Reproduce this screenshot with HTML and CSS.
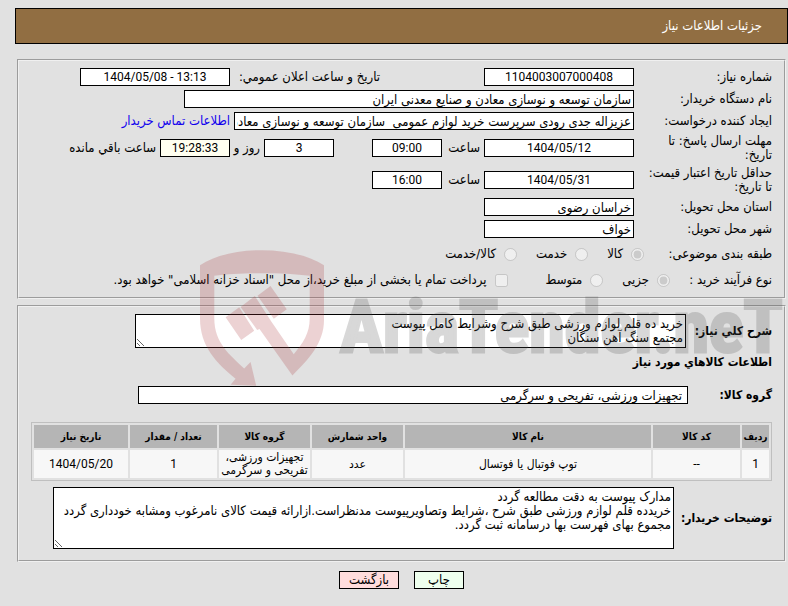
FILE: index.html
```
<!DOCTYPE html>
<html lang="fa" dir="rtl">
<head>
  <meta charset="UTF-8">
  <meta name="viewport" content="width=device-width, initial-scale=1">
  <title>جزئیات اطلاعات نیاز</title>
  <link rel="stylesheet" href="styles.css">
</head>
<body>

<header class="title-bar">جزئیات اطلاعات نیاز</header>

<main>
  <fieldset class="box">
    <div class="row">
      <label class="caption" for="needNo">شماره نیاز:</label>
      <input class="field w150 num" id="needNo" type="text" value="1104003007000408" readonly>
      <label class="announce" for="announceDate">تاریخ و ساعت اعلان عمومي:</label>
      <input class="field w150 num" id="announceDate" type="text" dir="ltr" value="1404/05/08 - 13:13" readonly>
    </div>
    <div class="row">
      <label class="caption" for="buyer">نام دستگاه خریدار:</label>
      <input class="field w450" id="buyer" type="text" value="سازمان توسعه و نوسازی معادن و صنایع معدنی ایران" readonly>
    </div>
    <div class="row">
      <label class="caption" for="creator">ایجاد کننده درخواست:</label>
      <input class="field w400" id="creator" type="text" value="عزیزاله جدی رودی سرپرست خرید لوازم عمومی  سازمان توسعه و نوسازی معادن و صنایع معدنی ایران" readonly>
      <a class="contact" href="#">اطلاعات تماس خریدار</a>
    </div>
    <div class="row tall">
      <label class="caption" for="replyDate">مهلت ارسال پاسخ: تا<br>تاریخ:</label>
      <input class="field w150 num" id="replyDate" type="text" value="1404/05/12" readonly>
      <label class="unit" for="replyHour">ساعت</label>
      <input class="field w70 num" id="replyHour" type="text" value="09:00" readonly>
      <input class="field w70 num days" id="daysLeft" type="text" value="3" aria-label="روز" readonly>
      <label class="and" for="timeLeft">روز و</label>
      <input class="field w70 num timer" id="timeLeft" type="text" value="19:28:33" readonly>
      <span>ساعت باقي مانده</span>
    </div>
    <div class="row tall">
      <label class="caption" for="priceDate">حداقل تاریخ اعتبار قیمت:<br>تا تاریخ:</label>
      <input class="field w150 num" id="priceDate" type="text" value="1404/05/31" readonly>
      <label class="unit" for="priceHour">ساعت</label>
      <input class="field w70 num" id="priceHour" type="text" value="16:00" readonly>
    </div>
    <div class="row">
      <label class="caption" for="province">استان محل تحویل:</label>
      <input class="field w150" id="province" type="text" value="خراسان رضوی" readonly>
    </div>
    <div class="row">
      <label class="caption" for="city">شهر محل تحویل:</label>
      <input class="field w150" id="city" type="text" value="خواف" readonly>
    </div>
    <div class="row options kind">
      <span class="options-title">طبقه بندی موضوعی:</span>
      <label class="option"><input type="radio" name="kind" checked disabled>کالا</label>
      <label class="option"><input type="radio" name="kind" disabled>خدمت</label>
      <label class="option"><input type="radio" name="kind" disabled>کالا/خدمت</label>
    </div>
    <div class="row options process">
      <span class="options-title">نوع فرآیند خرید :</span>
      <label class="option"><input type="radio" name="process" checked disabled>جزیی</label>
      <label class="option"><input type="radio" name="process" disabled>متوسط</label>
      <label class="option treasury"><input type="checkbox" disabled>پرداخت تمام یا بخشی از مبلغ خرید،از محل "اسناد خزانه اسلامی" خواهد بود.</label>
    </div>
  </fieldset>

  <fieldset class="box details">
    <div class="line">
      <label class="heading summary-label" for="summary">شرح کلي نیاز:</label>
      <textarea class="field summary" id="summary" readonly>خرید ده قلم لوازم ورزشی طبق شرح وشرایط کامل پیوست
مجتمع سنگ آهن سنگان</textarea>
    </div>
    <h2 class="heading">اطلاعات کالاهاي مورد نیاز</h2>
    <div class="line group">
      <label class="heading" for="group">گروه کالا:</label>
      <input class="field group-field" id="group" type="text" value="تجهیزات ورزشی، تفریحی و سرگرمی" readonly>
    </div>
    <table class="goods">
      <thead>
        <tr>
          <th class="col-row">ردیف</th>
          <th class="col-code">کد کالا</th>
          <th>نام کالا</th>
          <th class="col-mid">واحد شمارش</th>
          <th class="col-mid">گروه کالا</th>
          <th class="col-code">تعداد / مقدار</th>
          <th class="col-date">تاریخ نیاز</th>
        </tr>
      </thead>
      <tbody>
        <tr>
          <td class="num">1</td>
          <td class="num">--</td>
          <td>توپ فوتبال یا فوتسال</td>
          <td>عدد</td>
          <td>تجهیزات ورزشی، تفریحی و سرگرمی</td>
          <td class="num">1</td>
          <td class="num">1404/05/20</td>
        </tr>
      </tbody>
    </table>
    <div class="line">
      <label class="heading notes-label" for="notes">توضیحات خریدار:</label>
      <textarea class="field notes" id="notes" readonly>مدارک پیوست به دقت مطالعه گردد
خریدده قلم لوازم ورزشی طبق شرح ،شرایط وتصاویرپیوست مدنظراست.ازارائه قیمت کالای نامرغوب ومشابه خودداری گردد
مجموع بهای فهرست بها درسامانه ثبت گردد.</textarea>
    </div>
  </fieldset>

  <div class="actions">
    <button class="btn print" type="button">چاپ</button>
    <button class="btn back" type="button">بازگشت</button>
  </div>
</main>

<div class="watermark" dir="ltr" aria-hidden="true">
  <svg class="shield" viewBox="600 60 373 408">
    <path d="M600 105 C690 45 880 45 973 105 V270 C973 340 925 390 878 437 L779 297 L772 300 L722 231 L765 198 L815 275 L882 373 C910 340 930 310 930 265 V137 C850 127 720 127 643 137 V265 C643 340 690 375 733 416 L752 396 L769 468 L692 465 L707 447 C650 400 600 350 600 265 Z"/>
    <path d="M677 262 L718 232 L763 302 L724 330 Z M773 197 L812 168 L861 238 L822 266 Z"/>
  </svg>
  <span class="brand">AriaTender.neT</span>
</div>

</body>
</html>
```
FILE: styles.css
```
body {
  margin: 0;
  padding: 8px 0 0;
  position: relative;
  overflow-x: hidden;
  background-color: #e1e1e1;
  color: #000;
  font-family: Tahoma, 'DejaVu Sans Condensed', 'DejaVu Sans', sans-serif;
  font-size: 13px;
  line-height: 14px;
}

.title-bar {
  margin-left: 15px;
  padding: 10px 25px;
  border: 1px solid #000;
  background-color: #916e42;
  color: #fff;
}

main {
  padding: 15px 2px 0 17px;
}

.box {
  margin: 0 0 6px;
  padding: 5px 12px;
  min-width: 0;
  border: 2px groove #f0f0f0;
}

/* form rows */
.row {
  display: flex;
  align-items: center;
  gap: 4px;
  height: 22px;
  white-space: nowrap;
}

.row.tall {
  height: 32px;
}

.caption {
  width: 134px;
}

.field {
  box-sizing: border-box;
  height: 18px;
  margin: 0;
  padding: 0 2px;
  border: 1px solid #000;
  border-radius: 0;
  background-color: #fff;
  color: #000;
  font: inherit;
}

.w70 { width: 70px; }
.w150 { width: 150px; }
.w400 { width: 400px; }
.w450 { width: 450px; }

.announce {
  width: 146px;
  margin-right: 100px;
}

.contact {
  color: #10e;
  text-decoration: none;
}

.unit {
  width: 34px;
}

.and {
  width: 26px;
}

.days {
  margin-right: 34px;
}

.timer {
  background-color: #fffff0;
}

/* radios and tick box */
.options {
  height: 28px;
  gap: 19px;
}

.options.process {
  height: 24px;
}

.option {
  display: flex;
  align-items: center;
  gap: 8px;
}

.option input {
  width: 13px;
  height: 13px;
  margin: 0;
}

.kind .options-title {
  width: 109px;
}

.process .options-title {
  width: 83px;
}

.treasury {
  margin-right: 19px;
}

/* goods section */
.details {
  padding: 7px 12px 11px;
}

.line {
  display: flex;
  align-items: center;
  gap: 4px;
}

.heading {
  margin: 0;
  font-size: 12px;
  font-weight: bold;
  line-height: 28px;
  white-space: nowrap;
}

.summary-label {
  width: 82px;
}

.notes-label {
  width: 94px;
}

.group {
  justify-content: space-between;
  margin: 5px 0 13px;
}

.group-field {
  width: 550px;
  margin-left: 107px;
  padding: 0 5px;
}

textarea.field {
  padding: 2px;
}

textarea.summary {
  width: 551px;
  height: 34px;
}

textarea.notes {
  width: 621px;
  height: 62px;
}

.goods {
  width: 100%;
  margin-bottom: 6px;
  border: 1px solid #bfbfbf;
  border-spacing: 2px;
  table-layout: fixed;
  font-size: 12px;
  line-height: 13px;
  text-align: center;
}

.goods th {
  height: 23px;
  padding: 0;
  background-color: #b5b5b5;
  font-size: 10px;
}

.goods td {
  height: 28px;
  padding: 0;
  background-color: #f7f7f7;
}

.field.num,
.goods .num {
  font-family: Tahoma, Roboto, sans-serif;
  font-size: 12px;
  text-align: center;
}

.col-row { width: 27px; }
.col-code { width: 87px; }
.col-mid { width: 91px; }
.col-date { width: 94px; }

.actions {
  display: flex;
  justify-content: center;
  gap: 15px;
  padding-top: 3px;
}

.btn {
  width: 60px;
  height: 18px;
  padding: 0;
  border: 1px solid #000;
  font: inherit;
}

.print {
  width: 50px;
  background-color: #efe;
}

.back {
  background-color: #fdd;
}

/* brand mark over the page */
.watermark {
  position: absolute;
  top: 250px;
  left: 200px;
  display: flex;
  align-items: flex-start;
  gap: 16px;
  pointer-events: none;
}

.shield {
  width: 124px;
  height: 136px;
  fill: rgba(170, 50, 55, 0.22);
}

.brand {
  color: #505050;
  font-family: 'Liberation Sans Narrow', 'Roboto Condensed', Roboto, sans-serif;
  font-size: 72px;
  font-weight: bold;
  line-height: 156px;
  -webkit-text-stroke: 3px #505050;
  opacity: 0.22;
}
```
